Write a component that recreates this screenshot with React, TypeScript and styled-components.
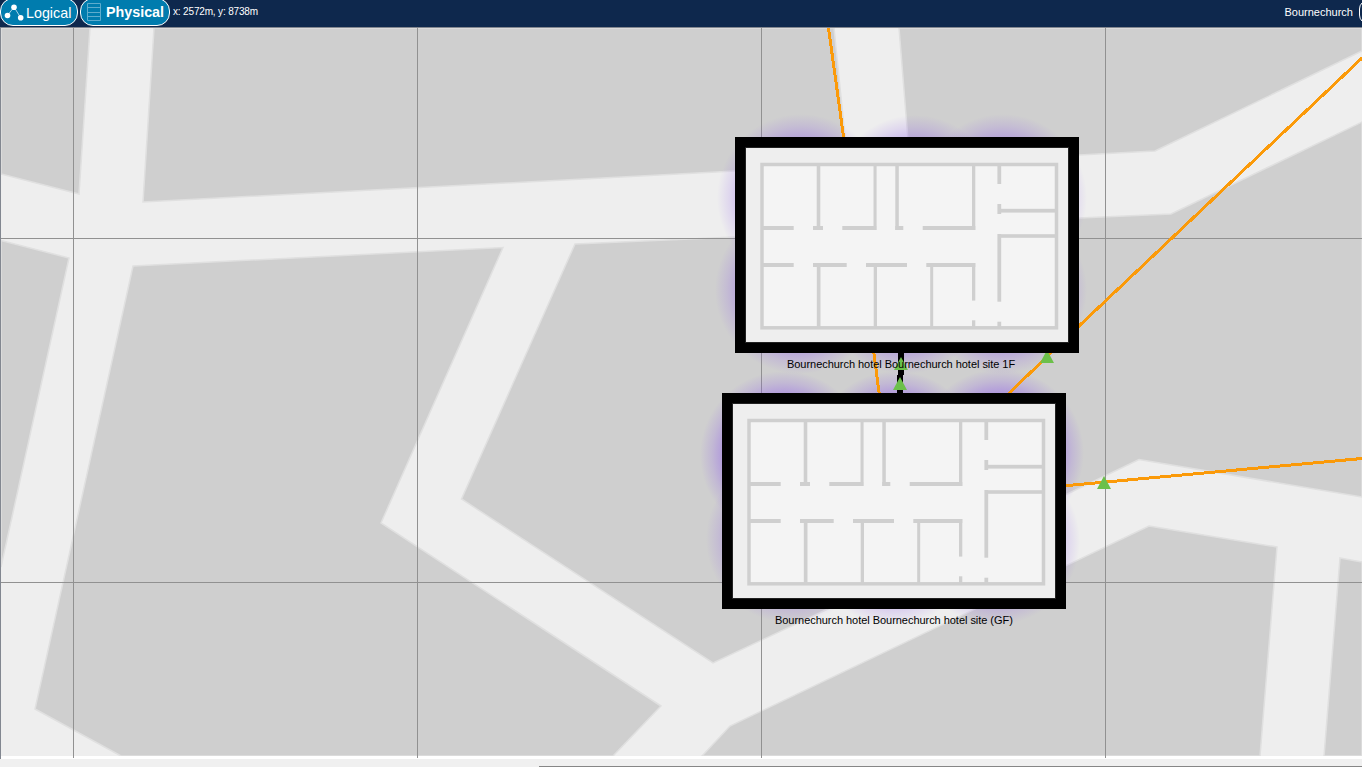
import React from "react";
import styled, { createGlobalStyle } from "styled-components";

const GlobalStyle = createGlobalStyle`
  * { box-sizing: border-box; }
  html, body { margin: 0; padding: 0; overflow: hidden; }
  body { font-family: "Liberation Sans", Arial, sans-serif; background: #f0f0f0; }
`;

const Page = styled.div`
  width: 1362px;
  height: 767px;
  display: flex;
  flex-direction: column;
  overflow: hidden;
  background: #f0f0f0;
`;

const Toolbar = styled.header`
  height: 27px;
  flex: none;
  display: flex;
  align-items: flex-start;
  gap: 2px;
  overflow: hidden;
  background: #0e284d;
  color: #fff;
`;

const ViewTab = styled.button<{ $active?: boolean; $width: number }>`
  flex: none;
  width: ${(p) => p.$width}px;
  height: 28px;
  margin: -2px 0 0;
  padding: ${(p) => (p.$active ? "0 0 0 2px" : "2px 0 0 2px")};
  display: flex;
  align-items: center;
  gap: ${(p) => (p.$active ? 4 : 0)}px;
  border: 1px solid #fff;
  border-radius: 13px;
  background: #007cae;
  color: #fff;
  font-family: inherit;
  font-size: 14.3px;
  line-height: 16px;
  font-weight: ${(p) => (p.$active ? 700 : 400)};
  white-space: nowrap;
`;

const Coordinates = styled.span`
  padding-top: 6px;
  margin-left: 1px;
  font-size: 10px;
  line-height: 12px;
  letter-spacing: -0.16px;
  white-space: nowrap;
`;

const Location = styled.span`
  margin-left: auto;
  padding-top: 6px;
  font-size: 11px;
  line-height: 13px;
`;

const EdgeButton = styled.button`
  flex: none;
  width: 30px;
  height: 24px;
  margin: 0 -27px 0 4px;
  border: 1px solid #fff;
  border-radius: 9px;
  background: #0e284d;
`;

const Canvas = styled.main`
  position: relative;
  flex: none;
  height: 732px;
  border-top: 1px solid #828790;
  border-left: 1px solid #828790;
  background: #fff;
  overflow: hidden;
`;

const MapLayer = styled.svg`
  display: block;
  width: 1361px;
  height: 731px;
`;

const Building = styled.section<{ $x: number; $y: number }>`
  position: absolute;
  left: ${(p) => p.$x - 1}px;
  top: ${(p) => p.$y - 28}px;
  width: 344px;
  height: 216px;
  border: 10px solid #000;
  background: #eee;
  box-shadow: inset 0 0 0 1px #222;
`;

const Plan = styled.svg`
  display: block;
  margin: -10px;
`;

const BuildingLabel = styled.span<{ $x: number; $y: number }>`
  position: absolute;
  left: ${(p) => p.$x - 1}px;
  top: ${(p) => p.$y - 28}px;
  font-size: 11px;
  line-height: 13px;
  letter-spacing: -0.04px;
  color: #000;
  white-space: nowrap;
`;

const ScrollBar = styled.footer`
  flex: 1;
  display: flex;
  align-items: flex-end;
  background: #f0f0f0;
`;

const ScrollThumb = styled.div`
  height: 1px;
  flex: 1;
  margin-left: 539px;
  background: #868686;
`;

const blocks = [
  "1,28 90,28 79,194 1,174",
  "154,28 834,28 848,166 735,171 143,202",
  "899,28 1362,28 1362,51 1155,151 1079,155 910,165",
  "1,240.500 69,258 1,567",
  "133,266 503,247.500 381,523 661,706 613,756 121,756 35,709",
  "575,244 735,237 1079,218 1171,214 1362,122 1362,497 1139,459.500 830,608 713,663 461.500,499",
  "1149,526 1277,547 1260,756 702,756 730,726",
  "1340,558 1362,562 1362,756 1324,756",
];

const coverage: { x: number; y: number; r: number; strength: number }[] = [
  { x: 801, y: 198, r: 84, strength: 0.95 },
  { x: 915, y: 199, r: 84, strength: 0.95 },
  { x: 1003, y: 198, r: 84, strength: 0.95 },
  { x: 799, y: 290, r: 84, strength: 1 },
  { x: 905, y: 290, r: 84, strength: 1 },
  { x: 1003, y: 290, r: 84, strength: 1 },
  { x: 784, y: 455, r: 84, strength: 1.1 },
  { x: 896, y: 455, r: 84, strength: 1.1 },
  { x: 1000, y: 453, r: 84, strength: 1.25 },
  { x: 790, y: 539, r: 84, strength: 0.95 },
  { x: 893, y: 541, r: 84, strength: 0.95 },
  { x: 996, y: 541, r: 84, strength: 0.95 },
];

const arrows: [number, number][] = [
  [901, 357],
  [900, 377],
  [1047, 350],
  [1104, 476],
];

const walls: [number, number, number, number][] = [
  [81.7, 28, 3.6, 65],
  [138.5, 28, 3.1, 65],
  [160.3, 28, 3.5, 65],
  [237, 28, 3.3, 65],
  [262.4, 28, 3.8, 19],
  [262.4, 67, 3.8, 10],
  [28, 89, 30.7, 4],
  [78, 89, 10, 4],
  [107.3, 89, 34, 4],
  [160.3, 89, 8, 4],
  [187.7, 89, 52.6, 4],
  [28, 126, 30.7, 4],
  [78, 126, 33.7, 4],
  [131, 126, 41, 4],
  [191.3, 126, 49, 4],
  [81.8, 130, 3.7, 60],
  [138.7, 130, 3.3, 60],
  [195.2, 130, 3, 60],
  [237, 126, 3.3, 37.6],
  [237, 183.3, 3.3, 7],
  [262.4, 97, 3.8, 67.7],
  [262.4, 184.7, 3.8, 6],
  [264, 71.8, 56, 3.8],
  [264, 97.2, 56, 3.6],
];

const NetworkIcon = () => (
  <svg width="23" height="20" viewBox="0 0 23 20" fill="#fff">
    <path d="M4.500 12.500 11 4 17.700 14.700" fill="none" stroke="#a9d3e6" />
    <circle cx="4.500" cy="12.500" r="2.800" />
    <circle cx="11" cy="4.200" r="2.800" />
    <circle cx="17.700" cy="14.800" r="2.800" />
  </svg>
);

const RackIcon = () => (
  <svg width="19" height="20" viewBox="0 0 19 20" fill="none" stroke="#5eaccd">
    <path d="M4.500 1.500h13v17h-13zM4.500 5.500h13M4.500 10.500h13M4.500 14.500h13" />
  </svg>
);

const FloorPlan = () => (
  <Plan width="344" height="216" viewBox="0 0 344 216">
    <rect x="27" y="27.500" width="294.500" height="163.300" fill="#f4f4f4" stroke="#cfcfcf" strokeWidth="3.500" />
    {walls.map(([x, y, w, h], i) => (
      <rect key={i} x={x} y={y} width={w} height={h} fill="#cfcfcf" />
    ))}
  </Plan>
);

const CityMap = () => (
  <MapLayer viewBox="1 28 1361 731">
    <defs>
      <radialGradient id="signal">
        <stop offset="0" stopColor="#8852ed" stopOpacity="0.8" />
        <stop offset="0.72" stopColor="#8852ed" stopOpacity="0.34" />
        <stop offset="0.86" stopColor="#8852ed" stopOpacity="0.15" />
        <stop offset="1" stopColor="#8852ed" stopOpacity="0" />
      </radialGradient>
      <radialGradient id="signal-strong">
        <stop offset="0" stopColor="#8852ed" stopOpacity="0.8" />
        <stop offset="0.72" stopColor="#8852ed" stopOpacity="0.42" />
        <stop offset="0.86" stopColor="#8852ed" stopOpacity="0.18" />
        <stop offset="1" stopColor="#8852ed" stopOpacity="0" />
      </radialGradient>
    </defs>
    <rect x="1" y="28" width="1361" height="728" fill="#eee" />
    {blocks.map((points) => (
      <polygon key={points} points={points} fill="#cfcfcf" stroke="#e0e0e0" strokeWidth="1.500" />
    ))}
    <rect x="1" y="756" width="1361" height="3" fill="#fff" />
    <path
      d="M73.500 28V758M417.500 28V758M761.500 28V758M1105.500 28V758M1 238.500H1362M1 582.500H1362"
      stroke="#919191"
      fill="none"
    />
    {coverage.map(({ x, y, r, strength }, i) => (
      <circle
        key={i}
        cx={x}
        cy={y}
        r={r}
        fill={strength > 1 ? "url(#signal-strong)" : "url(#signal)"}
        opacity={Math.min(strength, 1)}
      />
    ))}
    <g stroke="#fb9a09" strokeWidth="3" fill="none">
      <path
        shapeRendering="crispEdges"
        d="M828.500 28 844 140M873.500 350 879.500 396M1362 58 1079 326 1004 398M1060 486.200 1362 458.500"
      />
    </g>
    <path d="M901 350V372L900 378V396" stroke="#000" strokeWidth="6" fill="none" shapeRendering="crispEdges" />
    {arrows.map(([x, y]) => (
      <polygon key={x} points={`${x},${y} ${x + 7},${y + 13} ${x - 7},${y + 13}`} fill="#6cc04a" />
    ))}
  </MapLayer>
);

export default function App() {
  return (
    <>
      <GlobalStyle />
      <Page>
        <Toolbar>
          <ViewTab $width={78}>
            <NetworkIcon />
            Logical
          </ViewTab>
          <ViewTab $active $width={90}>
            <RackIcon />
            Physical
          </ViewTab>
          <Coordinates>x: 2572m, y: 8738m</Coordinates>
          <Location>Bournechurch</Location>
          <EdgeButton aria-label="Root" />
        </Toolbar>
        <Canvas>
          <CityMap />
          <Building $x={735} $y={137}>
            <FloorPlan />
          </Building>
          <Building $x={722} $y={393}>
            <FloorPlan />
          </Building>
          <BuildingLabel $x={787} $y={358}>Bournechurch hotel Bournechurch hotel site 1F</BuildingLabel>
          <BuildingLabel $x={775} $y={614}>Bournechurch hotel Bournechurch hotel site (GF)</BuildingLabel>
        </Canvas>
        <ScrollBar>
          <ScrollThumb />
        </ScrollBar>
      </Page>
    </>
  );
}
